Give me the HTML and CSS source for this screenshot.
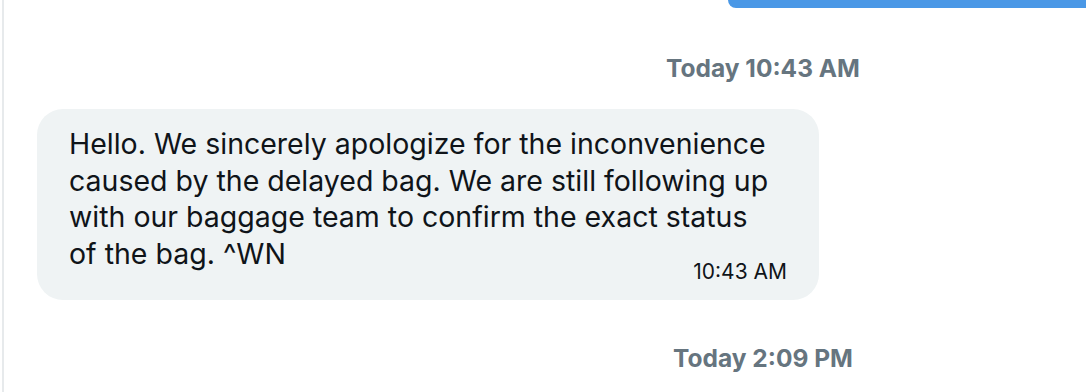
FILE: index.html
```html
<!DOCTYPE html>
<html>
<head>
<meta charset="utf-8">
<link rel="stylesheet" href="styles.css">
</head>
<body>
<div class="pane">
  <div class="sent-row"><div class="sent-bubble"></div></div>
  <div class="stamp-row stamp-first"><div class="stamp">Today 10:43 AM</div></div>
  <div class="msg-row">
    <div class="bubble">
      <p class="msg-text">Hello. We sincerely apologize for the inconvenience caused by the delayed bag. We are still following up with our baggage team to confirm the exact status of the bag. ^WN</p>
      <div class="msg-time">10:43 AM</div>
    </div>
  </div>
  <div class="stamp-row stamp-last"><div class="stamp">Today 2:09 PM</div></div>
</div>
</body>
</html>
```
FILE: styles.css
```css
html, body {
  margin: 0;
  padding: 0;
  background: #ffffff;
  height: 100%;
  overflow: hidden;
}
.pane {
  margin-left: 2px;
  border-left: 2px solid #e7eaec;
  height: 392px;
  box-sizing: border-box;
  display: flex;
  flex-direction: column;
  font-family: Inter, "Noto Sans", sans-serif;
  color: #0f1419;
}
.sent-row {
  display: flex;
  justify-content: flex-end;
}
.sent-bubble {
  width: 358px;
  height: 8px;
  background: #4a98e6;
  border-bottom-left-radius: 24px;
}
.stamp-row {
  display: flex;
  justify-content: flex-end;
  padding-right: 173px;
}
.stamp {
  width: 300px;
  text-align: center;
  font-size: 24.5px;
  font-weight: 700;
  color: #66757f;
  line-height: 28px;
}
.stamp-first { margin-top: 46px; }
.stamp-last { margin-top: 44px; }
.msg-row {
  display: flex;
  padding-left: 33px;
  margin-top: 27px;
}
.bubble {
  width: 782px;
  box-sizing: border-box;
  background: #eff3f4;
  border-radius: 26px;
  padding: 17px 32px 16px 32px;
  display: grid;
}
.msg-text {
  grid-area: 1 / 1;
  margin: 0 0 11px 0;
  font-size: 28.5px;
  line-height: 36.7px;
  max-width: 712px;
}
.msg-time {
  grid-area: 1 / 1;
  justify-self: end;
  align-self: end;
  font-size: 21px;
  line-height: 24px;
  color: #0f1419;
}
```
